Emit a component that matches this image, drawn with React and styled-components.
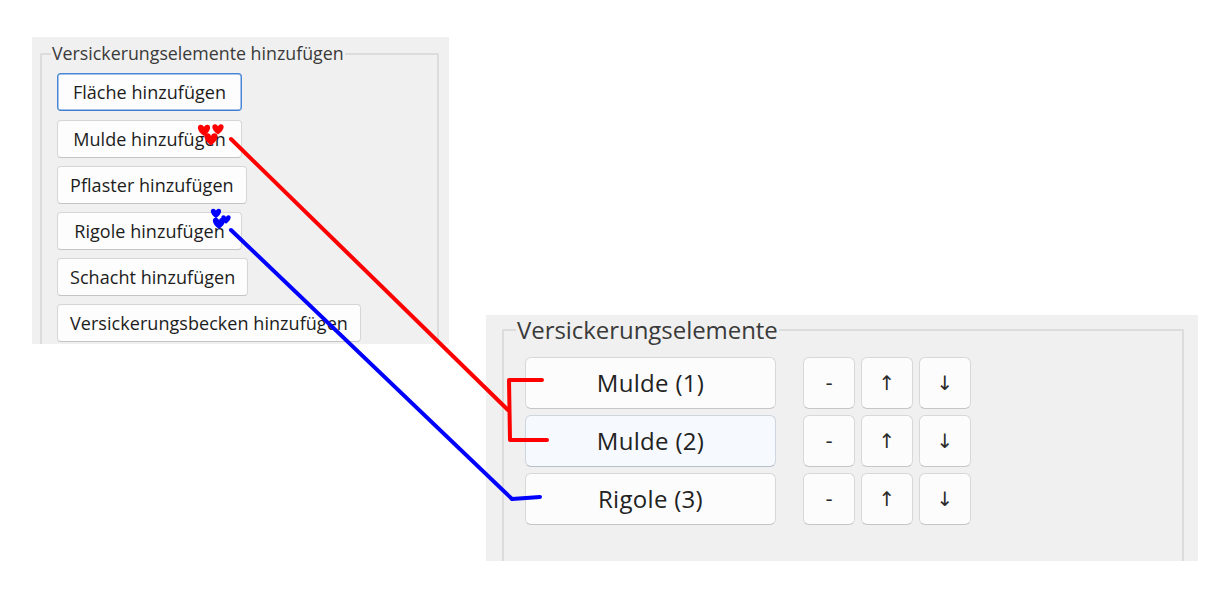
import React from "react";
import styled, { createGlobalStyle } from "styled-components";

const Global = createGlobalStyle`
  html, body { margin: 0; padding: 0; background: #ffffff; }
  body { font-family: "Open Sans", "Noto Sans", sans-serif; }
`;

const Canvas = styled.div`
  position: relative;
  width: 1226px;
  height: 595px;
  overflow: hidden;
  background: #ffffff;
  display: flex;
  align-items: flex-start;
  gap: 37px;
  padding: 37px 0 0 32px;
  box-sizing: border-box;
`;

const Panel = styled.div`
  background: #f0f0f0;
  width: ${(p) => p.$w}px;
  height: ${(p) => p.$h}px;
  margin-top: ${(p) => p.$top || 0}px;
  box-sizing: border-box;
  padding: ${(p) => p.$pad};
  flex: none;
  display: flex;
  flex-direction: column;
`;

const Group = styled.fieldset`
  margin: 0;
  border: 2px solid #dcdcdc;
  border-bottom: none;
  border-radius: 2px 2px 0 0;
  box-sizing: border-box;
  flex: 1;
  padding: 0;
  min-width: 0;
`;

const Legend = styled.legend`
  font-family: "Open Sans", "Noto Sans", sans-serif;
  font-size: ${(p) => p.$size}px;
  color: #3a3a3a;
  padding: 0 1px;
  margin-left: ${(p) => p.$ml}px;
  line-height: 1.2;
  letter-spacing: ${(p) => p.$ls || 0}px;
`;

const GroupBody = styled.div`
  padding: ${(p) => p.$pad};
`;

const AddList = styled.div`
  display: flex;
  flex-direction: column;
  align-items: flex-start;
  gap: 8.2px;
`;

const AddButton = styled.button`
  font-family: "Open Sans", "Noto Sans", sans-serif;
  font-size: 18px;
  letter-spacing: 0.05px;
  color: #1c1c1c;
  height: 38px;
  min-width: 185px;
  padding: 0 12px;
  background: #fdfdfd;
  border: 1px solid ${(p) => (p.$focused ? "#4a86d6" : "#d6d6d6")};
  border-bottom-color: ${(p) => (p.$focused ? "#3f7bd0" : "#c4c4c4")};
  box-shadow: ${(p) => (p.$focused ? "inset 0 0 0 0.5px #4a86d6" : "none")};
  border-radius: 4px;
  text-align: center;
  cursor: pointer;
  box-sizing: border-box;
`;

const Rows = styled.div`
  display: flex;
  flex-direction: column;
  gap: 6px;
`;

const Row = styled.div`
  display: flex;
  align-items: center;
`;

const ItemButton = styled.button`
  font-family: "Open Sans", "Noto Sans", sans-serif;
  font-size: 24px;
  letter-spacing: 0.3px;
  color: #222222;
  width: 251px;
  height: 52px;
  padding: 0;
  background: ${(p) => (p.$hover ? "#f6f9fd" : "#fcfcfc")};
  border: 1px solid ${(p) => (p.$hover ? "#cdd5df" : "#d8d8d8")};
  border-bottom-color: ${(p) => (p.$hover ? "#b6bfca" : "#c6c6c6")};
  border-radius: 6px;
  box-sizing: border-box;
  cursor: pointer;
`;

const Tools = styled.div`
  display: flex;
  gap: 6px;
  margin-left: 27px;
`;

const ToolButton = styled.button`
  font-family: "DejaVu Sans", "Noto Sans", sans-serif;
  font-size: 20px;
  color: #2a2a2a;
  width: 52px;
  height: 52px;
  padding: 0;
  background: #fcfcfc;
  border: 1px solid #d8d8d8;
  border-bottom-color: #c6c6c6;
  border-radius: 6px;
  box-sizing: border-box;
  cursor: pointer;
`;

const Overlay = styled.svg`
  position: absolute;
  left: 0;
  top: 0;
  width: 1226px;
  height: 595px;
  pointer-events: none;
`;

const heart =
  "M0 4 C-6 0 -6 -5 -2.6 -5 C-1.2 -5 -0.3 -4 0 -3 C0.3 -4 1.2 -5 2.6 -5 C6 -5 6 0 0 4 Z";

const Heart = ({ x, y, s = 1, c }) => (
  <path d={heart} fill={c} transform={`translate(${x} ${y}) scale(${s})`} />
);

const addItems = [
  { label: "Fläche hinzufügen", focused: true },
  { label: "Mulde hinzufügen" },
  { label: "Pflaster hinzufügen" },
  { label: "Rigole hinzufügen" },
  { label: "Schacht hinzufügen" },
  { label: "Versickerungsbecken hinzufügen" },
];

const elements = [
  { label: "Mulde (1)" },
  { label: "Mulde (2)", hover: true },
  { label: "Rigole (3)" },
];

export default function App() {
  return (
    <>
      <Global />
      <Canvas>
        <Panel $w={417} $h={307} $pad="6px 10px 0 8px">
          <Group>
            <Legend $size={17.8} $ml={9}>
              Versickerungselemente hinzufügen
            </Legend>
            <GroupBody $pad="9px 0 0 15px">
              <AddList>
                {addItems.map((it) => (
                  <AddButton key={it.label} $focused={it.focused}>
                    {it.label}
                  </AddButton>
                ))}
              </AddList>
            </GroupBody>
          </Group>
        </Panel>
        <Panel $w={712} $h={246} $top={278} $pad="1px 14px 0 16px">
          <Group>
            <Legend $size={24} $ml={12} $ls={-0.05}>
              Versickerungselemente
            </Legend>
            <GroupBody $pad="12px 0 0 21px">
              <Rows>
                {elements.map((el) => (
                  <Row key={el.label}>
                    <ItemButton $hover={el.hover}>{el.label}</ItemButton>
                    <Tools>
                      <ToolButton>-</ToolButton>
                      <ToolButton>↑</ToolButton>
                      <ToolButton>↓</ToolButton>
                    </Tools>
                  </Row>
                ))}
              </Rows>
            </GroupBody>
          </Group>
        </Panel>
        <Overlay viewBox="0 0 1226 595">
          <g fill="none" strokeWidth="4" strokeLinecap="round" strokeLinejoin="round">
            <path d="M231 139 L508 410" stroke="#ff0000" />
            <path d="M542 380 L509 380 L510 440 L547 440" stroke="#ff0000" />
            <path d="M231 230 L512 499 L540 497" stroke="#0000ff" />
          </g>
          <Heart x={204} y={131} s={1.25} c="#ff0000" />
          <Heart x={218} y={130} s={1.15} c="#ff0000" />
          <Heart x={211} y={140} s={1.35} c="#ff0000" />
          <Heart x={216} y={214} s={1.05} c="#0000ff" />
          <Heart x={219} y={224} s={1.25} c="#0000ff" />
          <Heart x={226} y={220} s={0.95} c="#0000ff" />
        </Overlay>
      </Canvas>
    </>
  );
}
